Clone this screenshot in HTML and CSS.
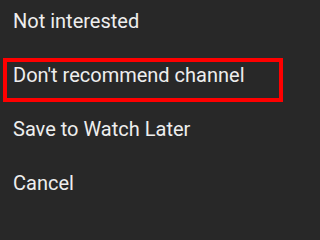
FILE: index.html
```html
<!DOCTYPE html>
<html>
<head>
<meta charset="utf-8">
<link rel="stylesheet" href="styles.css">
</head>
<body>
<ul class="menu">
  <li class="item">Not interested</li>
  <li class="item item--marked">Don't recommend channel</li>
  <li class="item">Save to Watch Later</li>
  <li class="item">Cancel</li>
</ul>
</body>
</html>
```

FILE: styles.css
```css
html, body {
  margin: 0;
  padding: 0;
  background: #282828;
}
body {
  width: 308px;
  height: 208px;
  overflow: hidden;
  font-family: Roboto, "Liberation Sans", sans-serif;
}
.menu {
  list-style: none;
  margin: 0;
  padding: 0;
  display: flex;
  flex-direction: column;
}
.item {
  position: relative;
  height: 54px;
  box-sizing: border-box;
  padding: 11px 0 0 13px;
  font-size: 20px;
  line-height: 20px;
  color: #eeeeee;
}
.item--marked::after {
  content: "";
  position: absolute;
  left: 3px;
  top: 4px;
  width: 280px;
  height: 44px;
  box-sizing: border-box;
  border: 4px solid #ff0000;
}
```
